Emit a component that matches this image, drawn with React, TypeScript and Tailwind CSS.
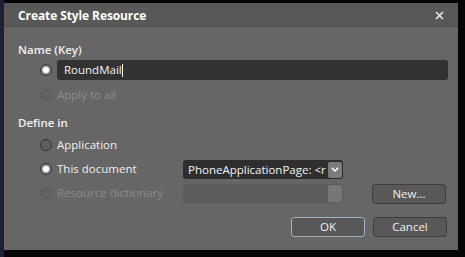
import React from "react";

function Radio({ checked, disabled }: { checked?: boolean; disabled?: boolean }) {
  return (
    <div
      className={
        "w-[12px] h-[12px] rounded-full border flex items-center justify-center shrink-0 " +
        (disabled ? "border-[#5a5a5a] bg-[#626262]" : "border-[#363636] bg-[#5e5e5e]")
      }
    >
      {checked && <div className="w-[6px] h-[6px] rounded-full bg-white shadow-[0_0_2px_1px_rgba(255,255,255,0.6)]" />}
    </div>
  );
}

function RadioRow({ label, checked, disabled }: { label: string; checked?: boolean; disabled?: boolean }) {
  return (
    <div className="flex items-center gap-[5px] h-[24px]">
      <Radio checked={checked} disabled={disabled} />
      <span className={"whitespace-nowrap " + (disabled ? "text-[#8c8c8c]" : "text-[#f0f0f0]")}>{label}</span>
    </div>
  );
}

export default function App() {
  return (
    <div
      className="w-[465px] h-[257px] bg-[#050507] border-l-[4px] border-[#1b2233] pt-[3px] pr-[7px] pb-[7px] overflow-hidden"
      style={{ fontFamily: '"Open Sans", "Noto Sans", sans-serif' }}
    >
      <div className="w-[454px] h-[247px] bg-[#666666] flex flex-col text-[11.5px]">
        <div className="h-[24px] bg-[#585858] border-b border-[#505050] flex items-center justify-between pl-[14px] pr-[14px] pt-[2px]">
          <span className="text-white font-bold text-[12px] tracking-[-0.1px]">Create Style Resource</span>
          <svg width="9" height="9" viewBox="0 0 9 9">
            <path d="M1 1 L8 8 M8 1 L1 8" stroke="#e8e8e8" strokeWidth="1.6" />
          </svg>
        </div>
        <div className="flex flex-col pl-[14px] pr-[10px] pt-[15px]">
          <div className="text-[#f0f0f0] font-semibold h-[16px] leading-[16px]">Name (Key)</div>
          <div className="flex items-center gap-[5px] pl-[22px] mt-[2px] h-[20px]">
            <Radio checked />
            <div className="flex-1 h-[20px] bg-[#323232] rounded-[3px] flex items-center pl-[7px] text-[#f4f4f4]">
              RoundMail<span className="w-[1px] h-[13px] bg-white" />
            </div>
          </div>
          <div className="pl-[22px] mt-[3px]">
            <RadioRow label="Apply to all" disabled />
          </div>
          <div className="text-[#f0f0f0] font-semibold h-[16px] leading-[16px] mt-[8px]">Define in</div>
          <div className="pl-[22px] mt-[2px] flex">
            <div className="flex flex-col w-[143px]">
              <RadioRow label="Application" />
              <RadioRow label="This document" checked />
              <RadioRow label="Resource dictionary" disabled />
            </div>
            <div className="flex flex-col pt-[27px] gap-[5px]">
              <div className="w-[160px] h-[19px] bg-[#2e2e2e] rounded-[3px] flex items-center justify-between pl-[5px] pr-[1px] text-[#f4f4f4]">
                <span className="whitespace-nowrap">PhoneApplicationPage: &lt;r</span>
                <div className="w-[14px] h-[16px] bg-[#7c7c7c] rounded-[2px] flex items-center justify-center shrink-0">
                  <svg width="8" height="5" viewBox="0 0 8 5">
                    <path d="M0.8 0.8 L4 4 L7.2 0.8" stroke="#fff" strokeWidth="1.5" fill="none" />
                  </svg>
                </div>
              </div>
              <div className="w-[160px] h-[19px] bg-[#5c5c5c] rounded-[3px] flex items-center justify-end pr-[1px]">
                <div className="w-[14px] h-[17px] bg-[#777777] rounded-[2px]" />
              </div>
            </div>
            <div className="flex flex-col pt-[51px] ml-[29px]">
              <div className="w-[74px] h-[20px] bg-[#585858] border border-[#3e3e3e] rounded-[3px] flex items-center justify-center text-[#f0f0f0]">
                New...
              </div>
            </div>
          </div>
          <div className="flex justify-end gap-[8px] mt-[12px] pr-[1px]">
            <div className="w-[74px] h-[20px] bg-[#585858] border-[1.5px] border-[#9fb2c2] rounded-[3px] flex items-center justify-center text-[#f0f0f0]">
              OK
            </div>
            <div className="w-[74px] h-[20px] bg-[#585858] border border-[#3e3e3e] rounded-[3px] flex items-center justify-center text-[#f0f0f0]">
              Cancel
            </div>
          </div>
        </div>
      </div>
    </div>
  );
}
